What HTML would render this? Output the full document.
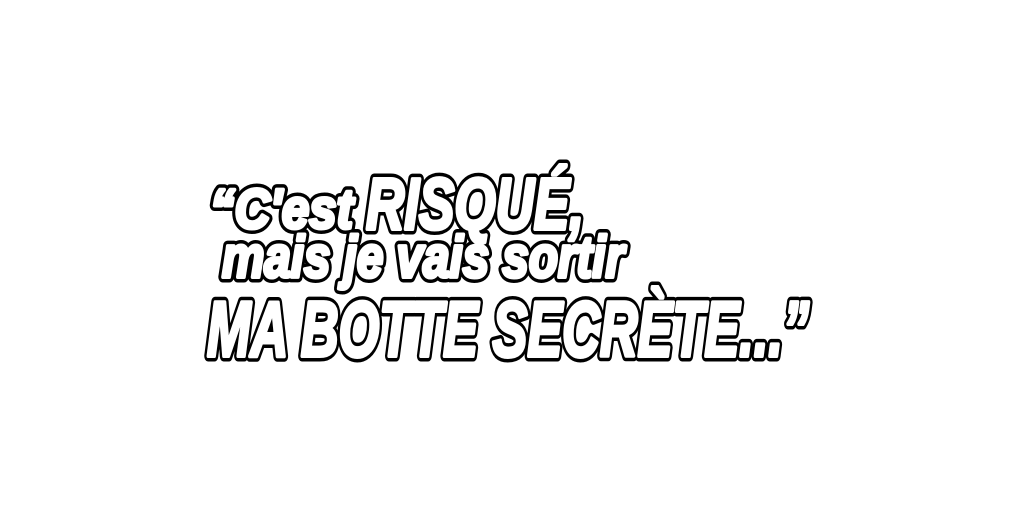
<!DOCTYPE html>
<html><head><style>
html,body{margin:0;padding:0;background:#fff;width:1024px;height:512px;overflow:hidden}
</style></head><body>
<svg width="1024" height="512" viewBox="0 0 1024 512">
<defs>
<g id="t" font-family="Liberation Sans Narrow, Liberation Sans, sans-serif" font-weight="bold" font-style="italic">
<text x="210" y="228" font-size="56" textLength="143" lengthAdjust="spacingAndGlyphs">“C'est</text>
<text x="366" y="229" font-size="72" textLength="218" lengthAdjust="spacingAndGlyphs">RISQUÉ,</text>
<text x="222" y="277" font-size="58" textLength="402" lengthAdjust="spacingAndGlyphs">mais je vais sortir</text>
<text x="207" y="356" font-size="78" textLength="602" lengthAdjust="spacingAndGlyphs">MA BOTTE SECRÈTE...”</text>
</g>
</defs>
<use href="#t" fill="#000" stroke="#000" stroke-width="11" stroke-linejoin="round"/>
<use href="#t" fill="#fff" stroke="#fff" stroke-width="4" stroke-linejoin="round"/>
</svg>
</body></html>
